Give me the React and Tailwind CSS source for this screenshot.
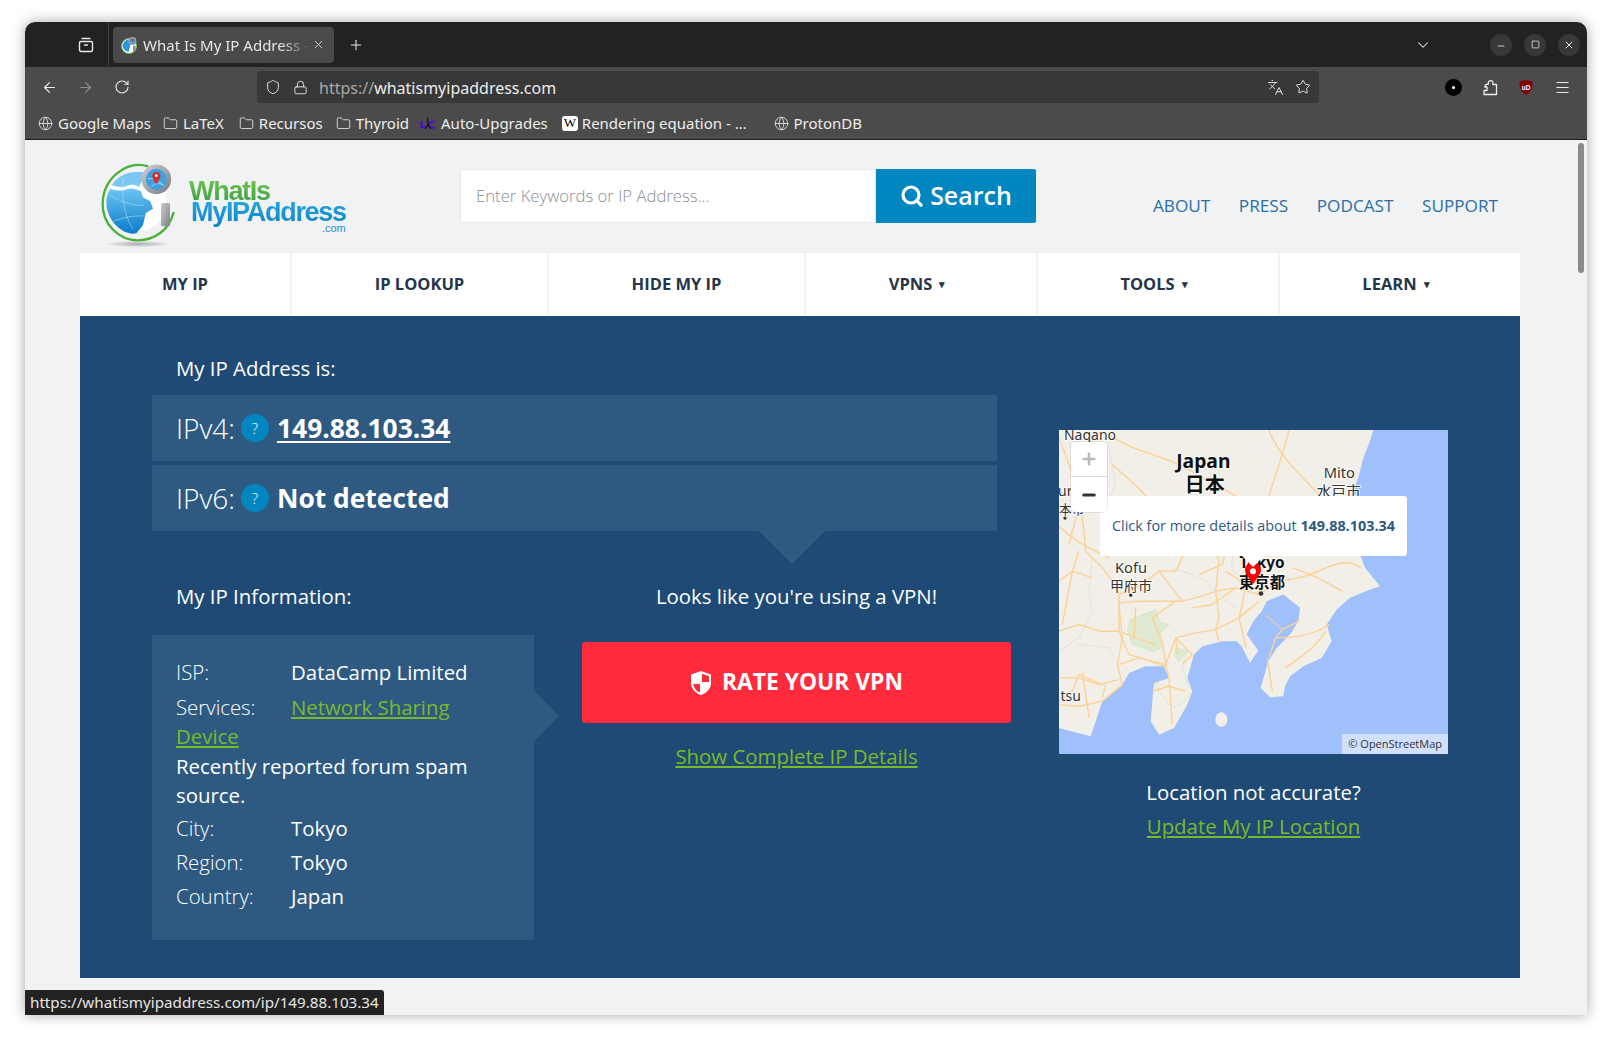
import { ArrowLeft, ArrowRight, RotateCw, Shield, Lock, Languages, Star, Menu, Globe, Folder, ChevronDown, Plus, X, Minus, Square, Search } from 'lucide-react';

const chrome = { fontFamily: '"Noto Sans", sans-serif' };

function FirefoxView() {
  return (
    <svg width="16" height="16" viewBox="0 0 16 16" fill="none" stroke="#e8e8e8" strokeWidth="1.4">
      <rect x="1.5" y="4.5" width="13" height="10" rx="1.5" />
      <path d="M4 1.5h8" strokeLinecap="round" />
      <path d="M6.5 8h3" strokeLinecap="round" />
    </svg>
  );
}

function Favicon() {
  return (
    <svg width="17" height="18" viewBox="0 0 17 18" className="shrink-0">
      <circle cx="8" cy="10" r="7.500" fill="#fff" stroke="#6fc04f" strokeWidth="1" />
      <path d="M1.500 9c1-3 3-5 6-6l1 4 1 2-2 7c-3-1-6-3-6-7z" fill="#2f94dc" />
      <circle cx="11.500" cy="5" r="3.300" fill="#3c9bd8" stroke="#9aa0a6" strokeWidth="1.400" />
      <circle cx="11.500" cy="4" r="1.300" fill="#d92b2b" />
      <rect x="12" y="9.500" width="2.600" height="6" rx="1" fill="#8a8f94" />
    </svg>
  );
}

function PuzzleIcon() {
  return (
    <svg width="16" height="17" viewBox="0 0 16 17" fill="none" stroke="#ededed" strokeWidth="1.300" strokeLinejoin="round" className="ml-[20px]">
      <path d="M6.500 5V4.500a2.300 2.300 0 1 1 4.400 0V5.500H14.500V15.500H2V11.500H5V8H2.800c.2-1.500 1.700-3 3.700-3z" />
    </svg>
  );
}

function Bookmark({ icon, label, className = '' }) {
  return (
    <div className={`flex items-center gap-[5px] ${className}`}>
      {icon}
      <span>{label}</span>
    </div>
  );
}

function TabBar() {
  return (
    <div className="flex h-[45px] items-center bg-[#222222] text-[#e6e6e6]">
      <div className="ml-[53px] flex h-full w-[31px] items-center border-r border-[#3d3d3d] pr-[14px]">
        <FirefoxView />
      </div>
      <div className="ml-[4px] flex h-[36px] w-[221px] items-center rounded-[4px] bg-[#4a4a4a] pl-[8px]">
        <Favicon />
        <div className="ml-[5px] mt-[1px] w-[168px] overflow-hidden whitespace-nowrap text-[15px] [mask-image:linear-gradient(to_right,black_82%,transparent)]">What Is My IP Address - WhatIsMyIP</div>
        <X size={13} strokeWidth={1.5} className="ml-[1px] shrink-0" />
      </div>
      <Plus size={16} strokeWidth={1.6} className="ml-[14px]" />
      <div className="flex-1" />
      <ChevronDown size={18} strokeWidth={1.4} className="mr-[58px]" />
      <div className="mr-[12px] flex h-[22px] w-[22px] items-center justify-center rounded-full bg-[#383838]"><Minus size={10} strokeWidth={2} className="mt-[3px]" /></div>
      <div className="mr-[12px] flex h-[22px] w-[22px] items-center justify-center rounded-full bg-[#383838]"><Square size={9} strokeWidth={2} /></div>
      <div className="mr-[7px] flex h-[22px] w-[22px] items-center justify-center rounded-full bg-[#383838]"><X size={12} strokeWidth={2} /></div>
    </div>
  );
}

function NavBar() {
  return (
    <div className="flex h-[40px] items-center bg-[#4b4b4b] text-[#ededed]">
      <ArrowLeft size={17} strokeWidth={1.6} className="ml-[16px]" />
      <ArrowRight size={17} strokeWidth={1.6} className="ml-[19px] text-[#8f8f8f]" />
      <RotateCw size={16} strokeWidth={1.6} className="ml-[20px]" />
      <div className="ml-[127px] flex h-[32px] w-[1062px] items-center rounded-[4px] bg-[#383838]">
        <Shield size={16} strokeWidth={1.4} className="ml-[8px]" />
        <Lock size={15} strokeWidth={1.4} className="ml-[12px]" />
        <div className="ml-[11px] mt-[1px] text-[16px]"><span className="text-[#a8a8a8]">https://</span>whatismyipaddress.com</div>
        <div className="flex-1" />
        <Languages size={17} strokeWidth={1.3} />
        <Star size={16} strokeWidth={1.4} className="ml-[11px] mr-[8px]" />
      </div>
      <div className="ml-[126px] flex h-[17px] w-[17px] items-center justify-center rounded-full bg-black"><div className="h-[3px] w-[3px] rounded-full bg-white" /></div>
      <PuzzleIcon />
      <svg width="16" height="17" viewBox="0 0 16 17" className="ml-[20px]">
        <path d="M8 1l6.500 1.500c0 6.500-1.500 11-6.500 13.500C3 13.500 1.500 9 1.500 2.500z" fill="#800000" />
        <text x="8" y="10.500" textAnchor="middle" fontSize="6.500" fontWeight="700" fill="#fff" fontFamily="Liberation Sans">uD</text>
      </svg>
      <Menu size={17} strokeWidth={1.4} className="ml-[20px]" />
    </div>
  );
}

function BookmarksBar() {
  const globe = <Globe size={15} strokeWidth={1.3} />;
  const folder = <Folder size={15} strokeWidth={1.3} />;
  return (
    <div className="flex h-[33px] items-center whitespace-nowrap border-b border-[#1c1c1c] bg-[#4b4b4b] pl-[13px] text-[15px] text-[#ededed]">
      <Bookmark icon={globe} label="Google Maps" />
      <Bookmark icon={folder} label="LaTeX" className="ml-[12px]" />
      <Bookmark icon={folder} label="Recursos" className="ml-[15px]" />
      <Bookmark icon={folder} label="Thyroid" className="ml-[13px]" />
      <Bookmark
        className="ml-[11px]"
        label="Auto-Upgrades"
        icon={
          <svg width="16" height="16" viewBox="0 0 16 16">
            <path d="M1.500 6v6h4.500M14.500 7.500a3.200 3.200 0 1 0 0 4.500" fill="none" stroke="#4b10c8" strokeWidth="2.300" />
            <path d="M7.500 2.500l.5 7-3 4.500M8 9.500l2.500 4" fill="none" stroke="#111" strokeWidth="1.300" />
          </svg>
        }
      />
      <Bookmark
        className="ml-[14px]"
        label="Rendering equation - …"
        icon={<div className="-mr-[1px] flex h-[15px] w-[16px] items-center justify-center rounded-[3px] bg-white text-[13px] text-black" style={{ fontFamily: 'Liberation Serif, serif' }}>W</div>}
      />
      <Bookmark icon={globe} label="ProtonDB" className="ml-[27px]" />
    </div>
  );
}

function Logo() {
  return (
    <div className="flex items-center">
      <svg width="90" height="90" viewBox="0 0 270 270" className="shrink-0">
        <defs>
          <linearGradient id="sea" x1="0" y1="0" x2="0" y2="1">
            <stop offset="0" stopColor="#6cc4f2" />
            <stop offset="1" stopColor="#0a7cc8" />
          </linearGradient>
          <linearGradient id="steel" x1="0" y1="0" x2="1" y2="1">
            <stop offset="0" stopColor="#c9cbcd" />
            <stop offset="1" stopColor="#7f8286" />
          </linearGradient>
          <radialGradient id="floor">
            <stop offset="0" stopColor="#a9abad" />
            <stop offset="1" stopColor="#f1f2f4" />
          </radialGradient>
        </defs>
        <ellipse cx="128" cy="258" rx="100" ry="10" fill="url(#floor)" />
        <path d="M160 25C95 5 25 60 23 135c-2 65 50 112 105 112 50 0 95-30 108-85" fill="none" stroke="#4bb03a" strokeWidth="7" />
        <circle cx="124" cy="132" r="90" fill="#fff" />
        <path d="M124 42c-30 0-58 14-74 40 12 4 30 8 46 2 14-6 28-4 36 4l10-22 8-22c-8-2-17-2-26-2z" fill="#7cc8f2" />
        <path d="M34 132c0-14 4-28 12-40 16 6 36 8 50 2 16-6 28 0 42 6l6 18 22 12 8 22-22 14-8 36-20 24c-6 2-14 2-20 0-40-10-70-50-70-94z" fill="url(#sea)" />
        <path d="M42 110c35 22 75 34 104 32M85 60c-6 50 0 110 30 155M55 190c25-10 60-18 90-16" fill="none" stroke="#bfe4f8" strokeWidth="1.500" />
        <circle cx="184" cy="64" r="38" fill="#3aa2e2" stroke="url(#steel)" strokeWidth="13" />
        <path d="M158 62c18-2 36 6 50 22M170 85c10-10 24-10 36-4" fill="none" stroke="#d4ecfa" strokeWidth="2" />
        <rect x="198" y="135" width="27" height="70" rx="5" fill="url(#steel)" />
        <path d="M184 79c-6-10-12-15-12-25a12 12 0 0 1 24 0c0 10-6 15-12 25z" fill="#d92b2b" />
        <circle cx="184" cy="53" r="4" fill="#fff" />
      </svg>
      <div className="ml-[4px] flex flex-col pt-[8px] text-[27px] font-bold leading-[21px] tracking-[-1.3px]" style={{ fontFamily: '"Liberation Sans", sans-serif' }}>
        <span className="bg-gradient-to-b from-[#6cc04a] to-[#2c9a46] bg-clip-text pb-[6px] -mb-[6px] text-transparent">WhatIs</span>
        <span className="ml-[2px] bg-gradient-to-b from-[#25a4e0] to-[#0a7cc4] bg-clip-text pb-[7px] -mb-[7px] text-transparent">MyIPAddress</span>
        <span className="-mt-[1px] self-end text-[11px] font-normal leading-[12px] tracking-normal text-[#1990d2]">.com</span>
      </div>
    </div>
  );
}

function Header() {
  return (
    <div className="flex h-[113px]">
      <div className="ml-[15px] w-[365px] pt-[18px]"><Logo /></div>
      <div className="mt-[29px] flex h-[54px]">
        <div className="flex w-[416px] items-center border border-[#e6e7e8] bg-white pl-[15px] text-[16.7px] font-light text-[#8a8f94]">Enter Keywords or IP Address...</div>
        <div className="flex w-[160px] items-center justify-center gap-[6px] rounded-r-[2px] bg-[#0286c0] text-[25px] font-semibold text-white">
          <Search size={24} strokeWidth={3.2} />
          Search
        </div>
      </div>
      <div className="mt-[53px] ml-[117px] flex gap-[28.500px] text-[17.200px] text-[#2a6fa8]">
        <span>ABOUT</span>
        <span>PRESS</span>
        <span>PODCAST</span>
        <span>SUPPORT</span>
      </div>
    </div>
  );
}

function MainNav() {
  const items = [
    { label: 'MY IP', w: 'w-[212px]' },
    { label: 'IP LOOKUP', w: 'w-[257px]' },
    { label: 'HIDE MY IP', w: 'w-[257px]' },
    { label: 'VPNS', w: 'w-[232px]', caret: true },
    { label: 'TOOLS', w: 'w-[242px]', caret: true },
    { label: 'LEARN', w: 'flex-1', caret: true },
  ];
  return (
    <div className="flex h-[63px] bg-white pb-[1px] text-[16.500px] font-bold text-[#25354a]">
      {items.map((item, i) => (
        <div key={item.label} className={`flex items-center justify-center ${item.w} ${item.caret ? 'pr-[8px]' : ''} ${i < 5 ? 'border-r-2 border-[#f1f2f4]' : ''}`}>
          {item.label}
          {item.caret && <span className="ml-[7px] text-[11px]">▾</span>}
        </div>
      ))}
    </div>
  );
}

function HelpDot() {
  return <span className="ml-[6px] mr-[8px] inline-flex h-[28px] w-[28px] items-center justify-center rounded-full bg-[#0286c0] text-[15px] font-light text-white">?</span>;
}

function IpRow({ label, children }) {
  return (
    <div className="flex h-[66px] w-[845px] items-center bg-[#2e5a82] pl-[24px] text-white">
      <span className="text-[28px] font-light">{label}</span>
      <HelpDot />
      {children}
    </div>
  );
}

function InfoRow({ label, children }) {
  return (
    <div className="flex h-[33.700px] items-center">
      <span className="w-[115px] font-light">{label}</span>
      <span>{children}</span>
    </div>
  );
}

function InfoPanel() {
  return (
    <div className="relative h-[305px] w-[382px] bg-[#2e5a82] px-[24px] pt-[20px] text-[20.400px] text-white">
      <InfoRow label="ISP:">DataCamp Limited</InfoRow>
      <div className="leading-[29px]">
        <span className="mt-[4px] inline-block w-[115px] font-light">Services:</span>
        <span className="text-[#7ab929] underline underline-offset-2">Network Sharing Device</span>
        <div className="mt-[1px]">Recently reported forum spam source.</div>
      </div>
      <div className="mt-[2px]">
        <InfoRow label="City:">Tokyo</InfoRow>
        <InfoRow label="Region:">Tokyo</InfoRow>
        <InfoRow label="Country:">Japan</InfoRow>
      </div>
      <div className="absolute top-[55px] -right-[25px] h-0 w-0 border-y-[26px] border-l-[25px] border-y-transparent border-l-[#2e5a82]" />
    </div>
  );
}

// traced from the reference crop, drawn inside a translate(27 390) group
const roads = [
  'M180 155L240 150 300 150 370 150 430 135 470 120 530 110 600 130',
  'M180 155L180 240 210 310 260 325 320 345',
  'M60 0L40 60 25 140 10 220',
  'M80 0L130 50 160 90 180 130 180 155',
  'M180 160L190 260 175 340 190 400',
  'M130 400L60 370 40 420 0 450',
  'M0 380L60 380 120 400 180 385',
  'M180 340L240 320 320 340 330 380',
  'M320 340L350 260 410 245 470 235 540 200 600 150',
  'M350 260L400 310',
  'M470 120L480 200 470 235 480 270',
  'M540 200L550 240 560 290',
  'M560 100L550 160 540 200',
  'M400 170L460 160 530 110',
  'M670 235L720 210',
  'M630 320L650 260 670 235',
  'M640 420L625 320',
  'M330 380L335 450 340 520',
  'M370 340L400 310',
  'M290 280L230 260 180 240',
  'M230 170L225 260',
  'M70 360L80 430 90 500',
  'M130 440L140 400',
  'M0 460L60 465 130 450 190 400',
  'M280 200L350 150',
  'M280 200L310 270 320 340',
  'M350 260L355 310',
  'M480 30L470 120',
  'M500 60L560 100',
  'M300 60L370 150',
  'M280 420L330 405 380 420',
  'M500 0L490 40 420 70',
  'M380 0L350 60 300 60 250 100 180 130',
  'M600 130L660 90 720 80',
  'M600 130L600 60 560 0',
  'M0 90L40 60 100 80',
  'M0 240L60 220 120 240 180 240',
  'M-27 -100C40 -30 90 -10 150 20',
  'M-10 -360C30 -270 70 -170 80 0',
  'M150 -350C230 -290 330 -290 430 -220 480 -190 550 -160 585 -130',
  'M600 -50C620 -160 660 -240 690 -363',
  'M700 -110C770 -50 850 -50 905 -10 860 -60 830 -120 775 -170',
  'M450 -140C470 -90 450 -40 480 30',
  'M630 -363C650 -300 720 -230 780 -170',
  'M160 -260C220 -200 280 -170 290 -100 310 -60 330 -10 380 0',
  'M700 50C770 70 810 100 850 120',
  'M720 80C800 60 850 10 905 50',
  'M650 260C720 260 770 250 810 220',
  'M680 350C720 320 770 290 800 240',
  'M30 -20C50 -100 60 -140 100 -200',
];
const lanes = [
  'M100 20L90 120 100 180 60 260 0 300',
  'M60 280L150 290 170 320',
  'M340 50L400 70 440 90 500 150 530 170',
  'M150 -300L170 -200 130 -120 170 -60',
  'M520 -30C540 0 500 40 530 70',
];

function MapPicture() {
  const land = '970,27 960,60 940,110 925,170 905,220 915,330 930,400 945,440 990,495 960,505 900,530 860,565 830,610 845,660 815,710 760,735 720,765 705,795 700,825 660,828 632,800 655,720 680,680 720,640 745,600 750,560 700,520 650,540 635,570 610,600 590,640 625,688 600,725 590,705 575,675 560,660 517,660 457,675 432,700 412,770 427,810 412,850 372,920 327,940 302,900 312,785 357,770 342,735 287,735 237,755 217,790 157,840 122,945 27,920 27,27';
  const halo = { paintOrder: 'stroke', stroke: 'rgba(255,255,255,0.75)', strokeWidth: 6 };
  return (
    <svg width="389" height="324" viewBox="27 27 1167 971" className="block" preserveAspectRatio="none" style={{ fontFamily: '"Noto Sans", "Noto Sans CJK JP", sans-serif' }}>
      <rect x="27" y="27" width="1167" height="971" fill="#a0c0fb" />
      <polygon points={land} fill="#f2efe9" />
      <ellipse cx="514" cy="895" rx="18" ry="22" fill="#f2efe9" />
      <g transform="translate(27 390)">
        <path d="M215 205L290 175 300 210 330 220 300 250 310 290 280 300 220 280 205 240z" fill="#dfe9d2" stroke="#a6e09a" strokeWidth="1.500" strokeDasharray="4 2" />
        <path d="M350 290L385 300 360 330 345 310z" fill="#dfe9d2" stroke="#a6e09a" strokeWidth="1.500" strokeDasharray="4 2" />
        <path d="M385 300L370 340 385 400 400 420 380 450 340 470 300 420 285 395 330 405" fill="none" stroke="#a6e09a" strokeWidth="1.500" strokeDasharray="4 2" />
        <g fill="none" stroke="#c8c8c8" strokeWidth="2" strokeDasharray="3 3">
          {lanes.map((d) => <path key={d} d={d} />)}
        </g>
        <g fill="none" stroke="#fdd193" strokeWidth="4.200" strokeLinejoin="round">
          {roads.map((d) => <path key={d} d={d} />)}
        </g>
        <path d="M620 190L670 235" stroke="#f7c99a" strokeWidth="3" />
      </g>
      <g fill="#333" textAnchor="middle" fontSize="42" style={halo}>
        <text x="120" y="56">Nagano</text>
        <text x="868" y="172" fontSize="44">Mito</text>
        <text x="243" y="455" fontSize="44">Kofu</text>
        <text x="243" y="510" fontSize="42">甲府市</text>
        <text x="866" y="228" fontSize="44">水戸市</text>
        <text x="62" y="838">tsu</text>
        <text x="46" y="226">ur</text>
        <text x="65" y="278" fontSize="38">本市</text>
      </g>
      <g fill="#111" textAnchor="middle" fontWeight="700" style={halo}>
        <text x="460" y="140" fontSize="58">Japan</text>
        <text x="464" y="214" fontSize="60">日本</text>
        <text x="636" y="442" fontSize="46">Tokyo</text>
        <text x="636" y="500" fontSize="46">東京都</text>
      </g>
      <circle cx="633" cy="517" r="7" fill="#333" />
      <circle cx="45" cy="291" r="5" fill="#333" />
      <circle cx="242" cy="522" r="5" fill="#333" />
      <path d="M609 490c-12-22-24-30-24-44a24 24 0 0 1 48 0c0 14-12 22-24 44z" fill="#f00" />
      <circle cx="609" cy="450" r="9" fill="#fff" />
    </svg>
  );
}

function MapBox() {
  return (
    <div className="relative h-[324px] w-[389px] overflow-hidden">
      <MapPicture />
      <div className="absolute left-[41px] top-[66px] flex h-[60px] w-[307px] items-center justify-center whitespace-nowrap rounded-[3px] bg-white text-[14.400px] text-[#2e5a82]">
        <span>Click for more details about <b className="font-bold">149.88.103.34</b></span>
      </div>
      <div className="absolute left-[183px] top-[126px] h-0 w-0 border-x-[11px] border-t-[11px] border-x-transparent border-t-white" />
      <div className="absolute left-[12px] top-[12px] w-[36px] rounded-[4px] bg-white text-[#333] shadow-[0_0_0_1px_rgba(0,0,0,0.08)]">
        <div className="flex h-[35px] items-center justify-center border-b border-[#ddd]"><Plus size={18} strokeWidth={3.5} className="text-[#bbb]" /></div>
        <div className="flex h-[35px] items-center justify-center"><Minus size={18} strokeWidth={4} /></div>
      </div>
      <div className="absolute right-0 bottom-0 flex h-[20px] items-center bg-white/50 px-[6px] text-[11px] text-[#333]">© OpenStreetMap</div>
    </div>
  );
}

function Hero() {
  return (
    <div className="flex h-[662px] bg-[#1f4a75] pl-[72px] text-white">
      <div className="w-[907px]">
        <div className="flex h-[79px] items-center pl-[24px] pt-[25px] text-[20.400px]">My IP Address is:</div>
        <IpRow label="IPv4:"><a className="pt-[1px] text-[26.400px] font-bold underline underline-offset-[3px]">149.88.103.34</a></IpRow>
        <div className="mt-[4px]"><IpRow label="IPv6:"><span className="pt-[1px] text-[26.400px] font-bold">Not detected</span></IpRow></div>
        <div className="relative flex">
          <div className="absolute left-[607px] top-0 h-0 w-0 border-x-[33px] border-t-[33px] border-x-transparent border-t-[#2e5a82]" />
          <div className="w-[430px]">
            <div className="flex h-[104px] items-center pl-[24px] pt-[27px] text-[20.400px]">My IP Information:</div>
            <InfoPanel />
          </div>
          <div className="w-[429px] text-center">
            <div className="flex h-[104px] items-center justify-center pt-[26px] text-[20.400px]">Looks like you're using a VPN!</div>
            <div className="mt-[7px] flex h-[81px] items-center justify-center gap-[10px] rounded-[3px] bg-[#ff2a3c] text-[22.800px] font-bold">
              <svg width="22" height="26" viewBox="0 0 22 26">
                <path d="M11 1l10 3.500v8c0 6-4 10.500-10 12.500C5 23 1 18.500 1 12.500v-8z" fill="#fff" />
                <path d="M12 3.800L19 6.200V12H12zM10 14H3.200c.6 4 3 7 6.800 8.600z" fill="#ff2a3c" />
              </svg>
              RATE YOUR VPN
            </div>
            <div className="mt-[18px] text-[20.400px] text-[#7ab929] underline underline-offset-2">Show Complete IP Details</div>
          </div>
        </div>
      </div>
      <div className="pt-[114px] text-center text-[20.400px]">
        <MapBox />
        <div className="mt-[23px]">Location not accurate?</div>
        <div className="mt-[3px] text-[#7ab929] underline underline-offset-2">Update My IP Location</div>
      </div>
    </div>
  );
}

export default function App() {
  return (
    <div className="h-[1043px] w-[1612px] overflow-hidden bg-white pt-[22px]" style={{ fontFamily: '"Open Sans", sans-serif' }}>
      <div className="relative ml-[25px] flex h-[993px] w-[1562px] flex-col overflow-hidden rounded-t-[10px] shadow-[0_0_14px_rgba(0,0,0,0.35)]">
        <div style={chrome}>
          <TabBar />
          <NavBar />
          <BookmarksBar />
        </div>
        <div className="flex-1 overflow-hidden bg-[#f1f2f4] pl-[55px]">
          <div className="w-[1440px]">
            <Header />
            <MainNav />
            <Hero />
          </div>
        </div>
        <div className="absolute right-[3px] top-[121px] h-[130px] w-[6px] rounded-full bg-[#8a8a8a]" />
        <div className="absolute bottom-0 left-0 flex h-[25px] w-[359px] items-center rounded-tr-[3px] bg-[#222222] pl-[5px] text-[15.200px] text-[#e6e6e6]" style={chrome}>https://whatismyipaddress.com/ip/149.88.103.34</div>
      </div>
    </div>
  );
}
